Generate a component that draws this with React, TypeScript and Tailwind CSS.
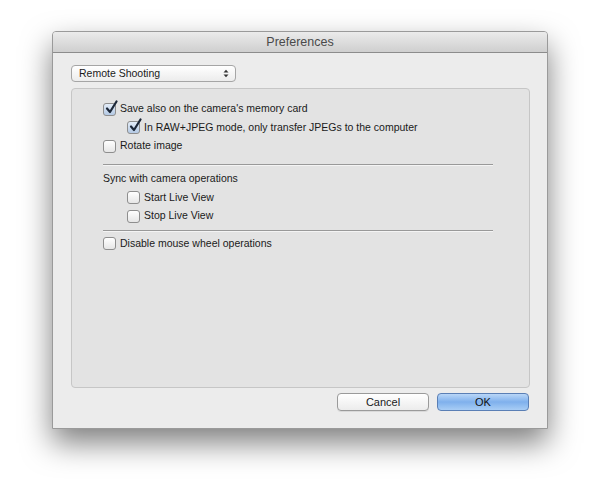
import React from "react";

const font = { fontFamily: '"Liberation Sans", Arial, sans-serif' };

function Check({ checked }: { checked?: boolean }) {
  return (
    <span
      className={
        "relative inline-flex h-[13px] w-[13px] shrink-0 rounded-[3px] border border-[#8e8e8e] " +
        (checked
          ? "bg-gradient-to-b from-[#e4edf8] to-[#b4c9e4]"
          : "bg-gradient-to-b from-[#ffffff] to-[#e6e6e6]")
      }
    >
      {checked && (
        <svg
          className="absolute left-[1px] top-[-4px]"
          width="13"
          height="15"
          viewBox="0 0 13 15"
        >
          <path
            d="M2 8.5 L5 12 L11.5 1.5"
            fill="none"
            stroke="#1c2738"
            strokeWidth="2.2"
            strokeLinecap="round"
            strokeLinejoin="round"
          />
        </svg>
      )}
    </span>
  );
}

function Row({ checked, label, indent }: { checked?: boolean; label: string; indent?: boolean }) {
  return (
    <div className={"flex h-[18.5px] items-center gap-[4px] " + (indent ? "pl-[24px]" : "")}>
      <Check checked={checked} />
      <span className="text-[10.5px] text-[#1a1a1a]">{label}</span>
    </div>
  );
}

function Sep({ className }: { className: string }) {
  return (
    <div className={"h-[2px] w-[390px] border-t border-b border-t-[#999999] border-b-[#f4f4f4] " + className} />
  );
}

export default function App() {
  return (
    <div className="min-h-[500px] w-[600px] bg-white pl-[52px] pt-[31px]" style={font}>
      <div className="w-[496px] overflow-hidden rounded-t-[4px] border border-[#9a9a9a] bg-[#ececec] shadow-[0_14px_30px_rgba(0,0,0,0.5)]">
        <div className="flex h-[21px] items-center justify-center border-b border-[#8c8c8c] bg-gradient-to-b from-[#ebebeb] to-[#cfcfcf]">
          <span className="text-[12.5px] text-[#4a4a4a]">Preferences</span>
        </div>
        <div className="px-[18px] pb-[17px] pt-[12px]">
          <div className="flex h-[17px] w-[165px] items-center justify-between rounded-[4px] border border-[#a5a5a5] bg-gradient-to-b from-[#ffffff] to-[#ececec] pl-[7px] pr-[6px]">
            <span className="text-[10.5px] text-[#1a1a1a]">Remote Shooting</span>
            <svg width="6" height="9" viewBox="0 0 6 9">
              <path d="M0.5 3.5 L3 0.8 L5.5 3.5 Z" fill="#333" />
              <path d="M0.5 5.5 L3 8.2 L5.5 5.5 Z" fill="#333" />
            </svg>
          </div>
          <div className="mt-[6px] h-[300px] w-[459px] rounded-[4px] border border-[#c6c6c6] bg-[#e3e3e3] pl-[31px] pr-[36px] pt-[11px]">
            <Row checked label="Save also on the camera's memory card" />
            <Row checked indent label="In RAW+JPEG mode, only transfer JPEGs to the computer" />
            <Row label="Rotate image" />
            <Sep className="mt-[8px]" />
            <div className="mt-[3px] flex h-[20px] items-center text-[10.5px] text-[#1a1a1a]">Sync with camera operations</div>
            <Row indent label="Start Live View" />
            <Row indent label="Stop Live View" />
            <Sep className="mt-[4px]" />
            <div className="mt-[3px]">
              <Row label="Disable mouse wheel operations" />
            </div>
          </div>
          <div className="mt-[5px] flex justify-end gap-[8px]">
            <button className="h-[18px] w-[92px] rounded-[4px] border border-[#9a9a9a] bg-gradient-to-b from-[#ffffff] to-[#ececec] text-[11px] text-[#1a1a1a] shadow-[0_1px_0_rgba(0,0,0,0.08)]">
              Cancel
            </button>
            <button className="h-[18px] w-[92px] rounded-[4px] border border-[#5a7fb5] bg-gradient-to-b from-[#b9d6f7] via-[#7fb0ec] to-[#a8cdf5] text-[11px] text-[#111]">
              OK
            </button>
          </div>
        </div>
      </div>
    </div>
  );
}
